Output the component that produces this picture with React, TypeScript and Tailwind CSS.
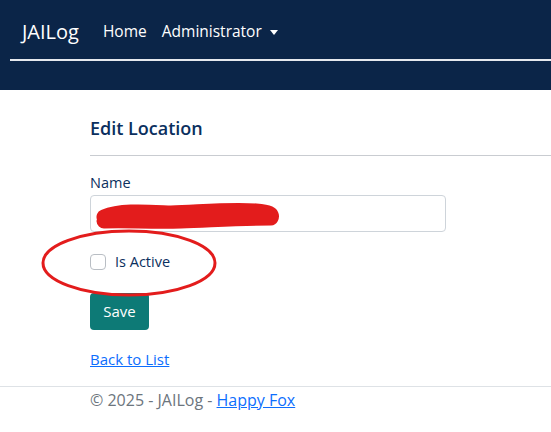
const App = () => {
  return (
    <div className="relative min-h-[432px] bg-white font-['Open_Sans',sans-serif] text-[15px]">
      {/* navbar */}
      <nav className="h-[90px] bg-[#0b2548] pt-[17px]">
        <div className="flex items-center pl-[22px]">
          <span className="text-[20px] text-white">JAILog</span>
          <a className="ml-[24px] text-[15.5px] text-white">Home</a>
          <a className="ml-[15px] flex items-center text-[15.5px] text-white">
            Administrator
            <span className="ml-[8px] inline-block h-0 w-0 border-x-[4.5px] border-t-[5px] border-x-transparent border-t-white" />
          </a>
        </div>
        <div className="ml-[10px] mt-[12px] h-[2px] bg-[#e6e9ee]" />
      </nav>

      <main className="pl-[90px]">
        <h2 className="mt-[25px] text-[18px] font-semibold text-[#0b2f5e]">Edit Location</h2>
        <hr className="mt-[13px] border-t border-[#c9ccd1]" />

        <form className="mt-[16px]">
          <label className="block text-[14.5px] text-[#0b2f5e]">Name</label>
          <div className="relative mt-[1px] h-[37px] w-[356px] rounded-[4px] border border-[#ced4da] bg-white">
            <svg className="absolute left-[0px] top-[3px]" width="190" height="34" viewBox="0 0 190 34">
              <path
                d="M13 18 C 30 11, 55 13, 80 14 C 110 13, 140 10, 165 12 C 178 13, 182 15, 180 19 C 150 19, 120 21, 90 22 C 60 23, 35 21, 13 22"
                fill="none"
                stroke="#e31c1c"
                strokeWidth="15"
                strokeLinecap="round"
                strokeLinejoin="round"
              />
            </svg>
          </div>

          <div className="mt-[19px] flex items-center">
            <input type="checkbox" className="h-[16px] w-[16px] appearance-none rounded-[4px] border border-[#b9bec4] bg-white" />
            <span className="ml-[9px] text-[14.5px] text-[#0b2f5e]">Is Active</span>
          </div>

          <button
            type="button"
            className="mt-[20px] h-[37px] w-[59px] rounded-[4px] bg-[#0d7a76] text-[15px] text-white"
          >
            Save
          </button>
        </form>

        <div className="mt-[18px]">
          <a className="text-[15px] text-[#0d6efd] underline">Back to List</a>
        </div>
      </main>

      <footer className="mt-[16px] border-t border-[#dee2e6] pl-[90px] pt-[1px] text-[16px] text-[#6c757d]">
        © 2025 - JAILog - <a className="text-[#0d6efd] underline">Happy Fox</a>
      </footer>

      {/* red annotation ellipse */}
      <svg className="pointer-events-none absolute left-[38px] top-[226px]" width="182" height="74" viewBox="0 0 182 74">
        <ellipse cx="91" cy="37" rx="86" ry="32" fill="none" stroke="#e31c1c" strokeWidth="3" />
      </svg>
    </div>
  );
};

export default App;
